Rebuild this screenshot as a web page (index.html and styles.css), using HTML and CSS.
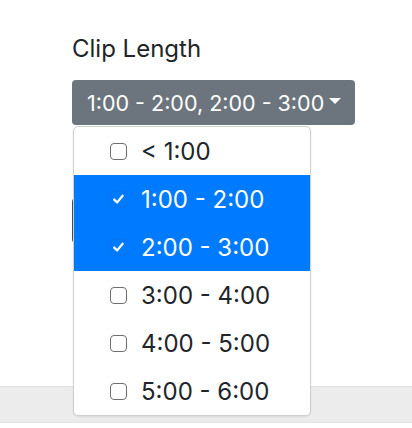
FILE: index.html
```html
<!DOCTYPE html>
<html>
<head>
<meta charset="utf-8">
<link rel="stylesheet" href="styles.css">
</head>
<body>
<div class="page">
  <div class="form">
    <label class="label">Clip Length</label>
    <div class="select">
      <button class="toggle"><span>1:00 - 2:00, 2:00 - 3:00</span><span class="caret"></span></button>
      <ul class="menu">
        <li class="item"><span class="box"></span><span>&lt; 1:00</span></li>
        <li class="item on"><span class="box"><svg viewBox="0 0 16 16" width="16" height="16"><path d="M3.4 8.6 L6.6 11.6 L12.4 4.6" fill="none" stroke="#fff" stroke-width="2.4" stroke-linecap="round" stroke-linejoin="round"/></svg></span><span>1:00 - 2:00</span></li>
        <li class="item on"><span class="box"><svg viewBox="0 0 16 16" width="16" height="16"><path d="M3.4 8.6 L6.6 11.6 L12.4 4.6" fill="none" stroke="#fff" stroke-width="2.4" stroke-linecap="round" stroke-linejoin="round"/></svg></span><span>2:00 - 3:00</span></li>
        <li class="item"><span class="box"></span><span>3:00 - 4:00</span></li>
        <li class="item"><span class="box"></span><span>4:00 - 5:00</span></li>
        <li class="item"><span class="box"></span><span>5:00 - 6:00</span></li>
      </ul>
    </div>
    <button class="submit">Go</button>
  </div>
  <div class="band"></div>
</div>
</body>
</html>
```
FILE: styles.css
```css
* { box-sizing: border-box; }
html, body { margin: 0; padding: 0; background: #fff; }
body { font-family: Inter, "Noto Sans", sans-serif; color: #212529; }
.page { width: 412px; height: 428px; overflow: hidden; }
.form { padding: 34px 0 0 72px; height: 386px; }
.label { display: block; font-size: 24px; line-height: 30px; margin-bottom: 16px; }
.select { position: relative; }
.toggle {
  display: inline-flex; align-items: center; gap: 5px;
  height: 45px; padding: 0 14px 0 15px;
  background: #6c757d; color: #fff; border: 0; border-radius: 4px;
  font-family: inherit; font-size: 21.5px; line-height: 30px;
}
.caret { width: 0; height: 0; border-top: 6px solid #fff; border-left: 6px solid transparent; border-right: 6px solid transparent; margin-top: -3px; }
.menu {
  position: absolute; left: 1px; top: 46px; z-index: 5;
  width: 238px; margin: 0; padding: 0; list-style: none;
  background: #fff; border: 1px solid #cfcfcf; border-radius: 5px;
  box-shadow: 0 1px 2px rgba(0,0,0,0.08);
}
.item { display: flex; align-items: center; gap: 14px; height: 48px; padding-left: 36px; font-size: 24px; color: #212529; }
.item.on { background: #007bff; color: #fff; }
.box { flex: none; width: 17px; height: 17px; border: 1.5px solid #6f6f6f; border-radius: 4px; display: flex; align-items: center; justify-content: center; }
.item.on .box { border-color: #0a74ef; background: #007bff; }
.box svg { display: block; }
.submit {
  display: block; margin-top: 73px; height: 45px; width: 120px;
  background: #4a4f55; color: #fff; border: 0; border-radius: 4px; font-size: 20px;
}
.band { height: 37px; background: #ececec; border-top: 1px solid #dee2e6; border-bottom: 1px solid #dee2e6; }
```
